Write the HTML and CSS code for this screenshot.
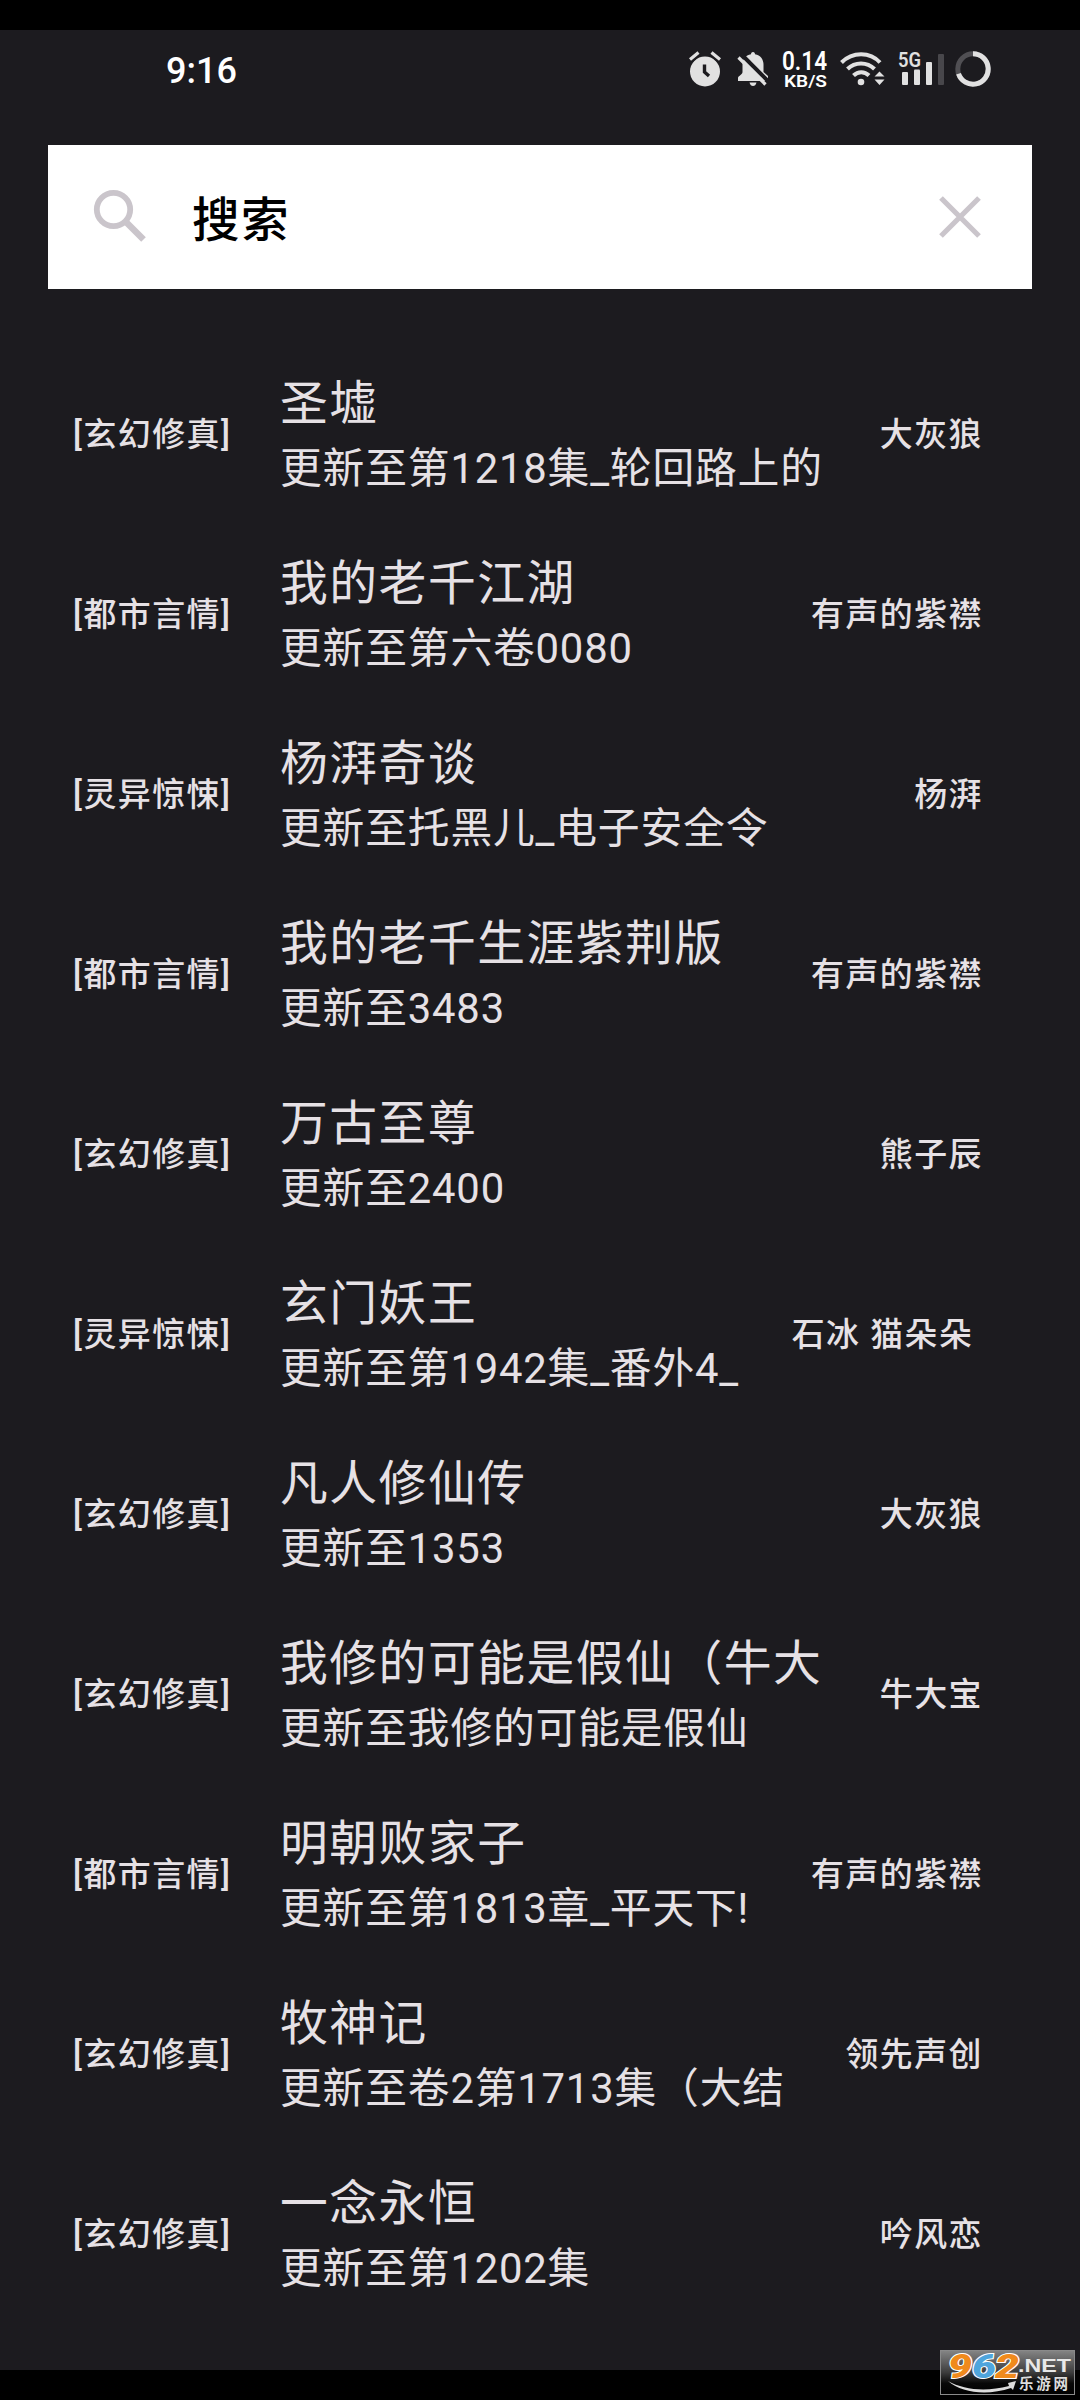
FILE: index.html
```html
<!DOCTYPE html>
<html lang="zh-CN">
<head>
  <meta charset="UTF-8" />
  <title>搜索</title>
  <meta name="viewport" content="width=device-width, initial-scale=1.0" />
  <link rel="stylesheet" href="styles.css">
</head>
<body>
  <div class="screen">

    <!-- Status bar -->
    <header class="status">
      <div class="status-time">9:16</div>
      <div class="status-icons">
        <svg class="icon-alarm" width="32" height="36" viewBox="0 0 32 36">
          <circle cx="16" cy="20.500" r="15" fill="#e1e1e1"/>
          <path d="M1 8.500L9.500 1.500M31 8.500L22.500 1.500" stroke="#1c1b1f" stroke-width="7"/>
          <path d="M1 8.500L9.500 1.500M31 8.500L22.500 1.500" stroke="#e1e1e1" stroke-width="3.200"/>
          <path d="M15.500 13.500V21L20 25" fill="none" stroke="#1c1b1f" stroke-width="3.400"/>
        </svg>
        <svg class="icon-bell" width="32" height="36" viewBox="0 0 32 36">
          <path d="M16 1C17.500 1 18 2 18 3.300C23.500 4.300 26.500 8.500 26.500 13.500V21L31 25V30H1V27C1 25 5.500 23.500 5.500 21V13.500C5.500 8.500 8.500 4.300 14 3.300C14 2 14.500 1 16 1Z" fill="#e1e1e1"/>
          <path d="M12.500 31.500H19.500C19 34 17.500 35 16 35S13 34 12.500 31.500Z" fill="#e1e1e1"/>
          <path d="M4 3L32 31" stroke="#1c1b1f" stroke-width="4"/>
          <path d="M1.500 6.500L28.500 33.500" stroke="#e1e1e1" stroke-width="3.200"/>
        </svg>
        <svg class="speed" width="46" height="42" viewBox="0 0 46 42">
          <text class="speed-value" x="0" y="19" textLength="45" lengthAdjust="spacingAndGlyphs">0.14</text>
          <text class="speed-unit" x="2" y="35.500" textLength="43" lengthAdjust="spacingAndGlyphs">KB/S</text>
        </svg>
        <svg class="icon-wifi" width="46" height="36" viewBox="0 0 46 36">
          <g fill="none" stroke="#e1e1e1" stroke-width="4">
            <path d="M1.500 11.500C12.500 .5 30 .5 40 11.500"/>
            <path d="M7.500 18C15 10.500 27 10.500 34.500 18"/>
            <path d="M13.500 24.500C18 20 24.500 20 29 24.500"/>
          </g>
          <circle cx="21" cy="31" r="3.300" fill="#e1e1e1"/>
          <path d="M34.500 25.500L39.500 20.500L44.500 25.500ZM34.500 28.500H44.500L39.500 34Z" fill="#e1e1e1"/>
        </svg>
        <svg class="icon-signal" width="47" height="36" viewBox="0 0 47 36">
          <text class="network" x="0" y="15.500" textLength="23" lengthAdjust="spacingAndGlyphs">5G</text>
          <rect x="4" y="21" width="6" height="13" rx="1" fill="#e1e1e1"/>
          <rect x="16" y="18.500" width="6" height="15.500" rx="1" fill="#e1e1e1"/>
          <rect x="28" y="11" width="6" height="23" rx="1" fill="#e1e1e1"/>
          <rect x="40" y="3" width="6" height="31" rx="1" fill="#48474b"/>
        </svg>
        <svg class="icon-battery" width="36" height="36" viewBox="0 0 36 36">
          <circle cx="18" cy="18" r="15.200" fill="none" stroke="#504f53" stroke-width="5"/>
          <path d="M18 2.800A15.200 15.200 0 1 1 3.540 22.700" fill="none" stroke="#e1e1e1" stroke-width="5"/>
        </svg>
      </div>
    </header>

    <!-- Search -->
    <div class="search">
      <svg class="search-icon" width="54" height="54" viewBox="0 0 54 54">
        <circle cx="20.500" cy="20.500" r="16.700" fill="none" stroke="#cac5cb" stroke-width="5.800"/>
        <path d="M33 33L50.500 50.500" stroke="#cac5cb" stroke-width="6.500"/>
      </svg>
      <div class="search-text">搜索</div>
      <svg class="search-clear" width="42" height="42" viewBox="0 0 42 42">
        <path d="M2 2L40 40M40 2L2 40" stroke="#cac5cb" stroke-width="5.200"/>
      </svg>
    </div>

    <!-- Results -->
    <main class="list">
      <div class="row">
        <div class="tag">[玄幻修真]</div>
        <div class="book">
          <div class="title">圣墟</div>
          <div class="update">更新至第1218集_轮回路上的</div>
        </div>
        <div class="author">大灰狼</div>
      </div>
      <div class="row">
        <div class="tag">[都市言情]</div>
        <div class="book">
          <div class="title">我的老千江湖</div>
          <div class="update">更新至第六卷0080</div>
        </div>
        <div class="author">有声的紫襟</div>
      </div>
      <div class="row">
        <div class="tag">[灵异惊悚]</div>
        <div class="book">
          <div class="title">杨湃奇谈</div>
          <div class="update">更新至托黑儿_电子安全令</div>
        </div>
        <div class="author">杨湃</div>
      </div>
      <div class="row">
        <div class="tag">[都市言情]</div>
        <div class="book">
          <div class="title">我的老千生涯紫荆版</div>
          <div class="update">更新至3483</div>
        </div>
        <div class="author">有声的紫襟</div>
      </div>
      <div class="row">
        <div class="tag">[玄幻修真]</div>
        <div class="book">
          <div class="title">万古至尊</div>
          <div class="update">更新至2400</div>
        </div>
        <div class="author">熊子辰</div>
      </div>
      <div class="row">
        <div class="tag">[灵异惊悚]</div>
        <div class="book">
          <div class="title">玄门妖王</div>
          <div class="update">更新至第1942集_番外4_</div>
        </div>
        <div class="author">石冰 猫朵朵 </div>
      </div>
      <div class="row">
        <div class="tag">[玄幻修真]</div>
        <div class="book">
          <div class="title">凡人修仙传</div>
          <div class="update">更新至1353</div>
        </div>
        <div class="author">大灰狼</div>
      </div>
      <div class="row">
        <div class="tag">[玄幻修真]</div>
        <div class="book">
          <div class="title">我修的可能是假仙（牛大</div>
          <div class="update">更新至我修的可能是假仙</div>
        </div>
        <div class="author">牛大宝</div>
      </div>
      <div class="row">
        <div class="tag">[都市言情]</div>
        <div class="book">
          <div class="title">明朝败家子</div>
          <div class="update">更新至第1813章_平天下!</div>
        </div>
        <div class="author">有声的紫襟</div>
      </div>
      <div class="row">
        <div class="tag">[玄幻修真]</div>
        <div class="book">
          <div class="title">牧神记</div>
          <div class="update">更新至卷2第1713集（大结</div>
        </div>
        <div class="author">领先声创</div>
      </div>
      <div class="row">
        <div class="tag">[玄幻修真]</div>
        <div class="book">
          <div class="title">一念永恒</div>
          <div class="update">更新至第1202集</div>
        </div>
        <div class="author">吟风恋</div>
      </div>
    </main>
  </div>

  <!-- Site badge -->
  <svg class="badge" width="135" height="45" viewBox="0 0 135 45">
    <defs>
      <linearGradient id="badge-bg" x1="0" y1="0" x2="0" y2="1">
        <stop offset="0" stop-color="#858585"/>
        <stop offset=".5" stop-color="#3c3c3c"/>
        <stop offset=".75" stop-color="#080808"/>
        <stop offset="1" stop-color="#000"/>
      </linearGradient>
    </defs>
    <rect x=".5" y=".5" width="134" height="44" fill="url(#badge-bg)" stroke="#8a8a8a"/>
    <g class="badge-num">
      <text x="8" y="27.500" fill="#f08a1c" textLength="24" lengthAdjust="spacingAndGlyphs">9</text>
      <text x="32" y="27.500" fill="#4fa5dc" textLength="24" lengthAdjust="spacingAndGlyphs">6</text>
      <text x="55" y="27.500" fill="#f08a1c" textLength="24" lengthAdjust="spacingAndGlyphs">2</text>
    </g>
    <path d="M8 31C24 40 46 42 69 36L68 33L76 31L73 40L71 38C47 46 22 43 8 31Z" fill="#ddd"/>
    <text class="badge-net" x="78" y="22" textLength="53" lengthAdjust="spacingAndGlyphs">.NET</text>
    <text class="badge-cn" x="79" y="39" textLength="49">乐游网</text>
  </svg>
</body>
</html>
```
FILE: styles.css
```css
:root {
  --bg: #1c1b1f;
  --fg: #e6e1e5;
}

* {
  box-sizing: border-box;
}

body {
  margin: 0;
  background: #000;
  color: var(--fg);
  font-family: Roboto, "Noto Sans CJK SC", sans-serif;
}

.screen {
  width: 1080px;
  height: 2400px;
  border-top: 30px solid #000;
  border-bottom: 30px solid #000;
  background: var(--bg);
}

/* Status bar */
.status {
  display: flex;
  justify-content: space-between;
  height: 115px;
  padding: 21px 89px 0 166px;
}

.status-time {
  font-size: 36px;
  font-weight: 500;
  line-height: 40px;
  color: #fff;
}

.status-icons {
  display: flex;
  align-items: flex-start;
}

.icon-bell {
  margin-left: 16px;
}

.speed {
  margin-left: 13px;
  overflow: visible;
  fill: #fff;
}

.speed-value {
  font-size: 25px;
  font-weight: 600;
}

.speed-unit {
  font-size: 17px;
  font-weight: 600;
}

.icon-wifi {
  margin-left: 12px;
}

.icon-signal {
  margin-left: 12px;
  overflow: visible;
}

.icon-battery {
  margin-left: 10px;
}

.network {
  font-size: 19.5px;
  font-weight: 600;
  fill: #e1e1e1;
}

/* Search */
.search {
  display: flex;
  align-items: center;
  height: 144px;
  margin: 0 48px;
  padding: 0 51px 0 45px;
  background: #fff;
}

.search-icon {
  margin-bottom: 2px;
}

.search-text {
  flex: 1;
  padding: 8px 0 0 45px;
  font-size: 47.5px;
  font-weight: 500;
  line-height: 70px;
  letter-spacing: 1.5px;
  color: #000;
}

/* Results */
.list {
  padding: 55px 97px 0 73px;
}

.row {
  display: flex;
  align-items: center;
  height: 180px;
}

.tag {
  width: 207px;
}

.tag,
.author {
  padding-top: 1px;
  font-size: 32.9px;
  font-weight: 500;
  line-height: 48px;
  letter-spacing: 1.5px;
  white-space: pre;
}

.book {
  flex: 1;
  min-width: 0;
  white-space: nowrap;
}

.title {
  font-size: 47.8px;
  line-height: 70px;
  letter-spacing: 1.5px;
}

.update {
  font-size: 41.8px;
  line-height: 60px;
  letter-spacing: 0.8px;
}

/* Site badge */
.badge {
  position: absolute;
  left: 940px;
  top: 2350px;
  overflow: visible;
}

.badge-num {
  font: italic 900 33px Roboto, sans-serif;
  stroke: #fff;
  stroke-width: 2px;
  paint-order: stroke;
}

.badge-net {
  font: 700 18px "Liberation Sans", sans-serif;
  fill: #e8e8e8;
}

.badge-cn {
  font: 700 14.5px "Noto Sans CJK SC", sans-serif;
  fill: #ddd;
}
```
